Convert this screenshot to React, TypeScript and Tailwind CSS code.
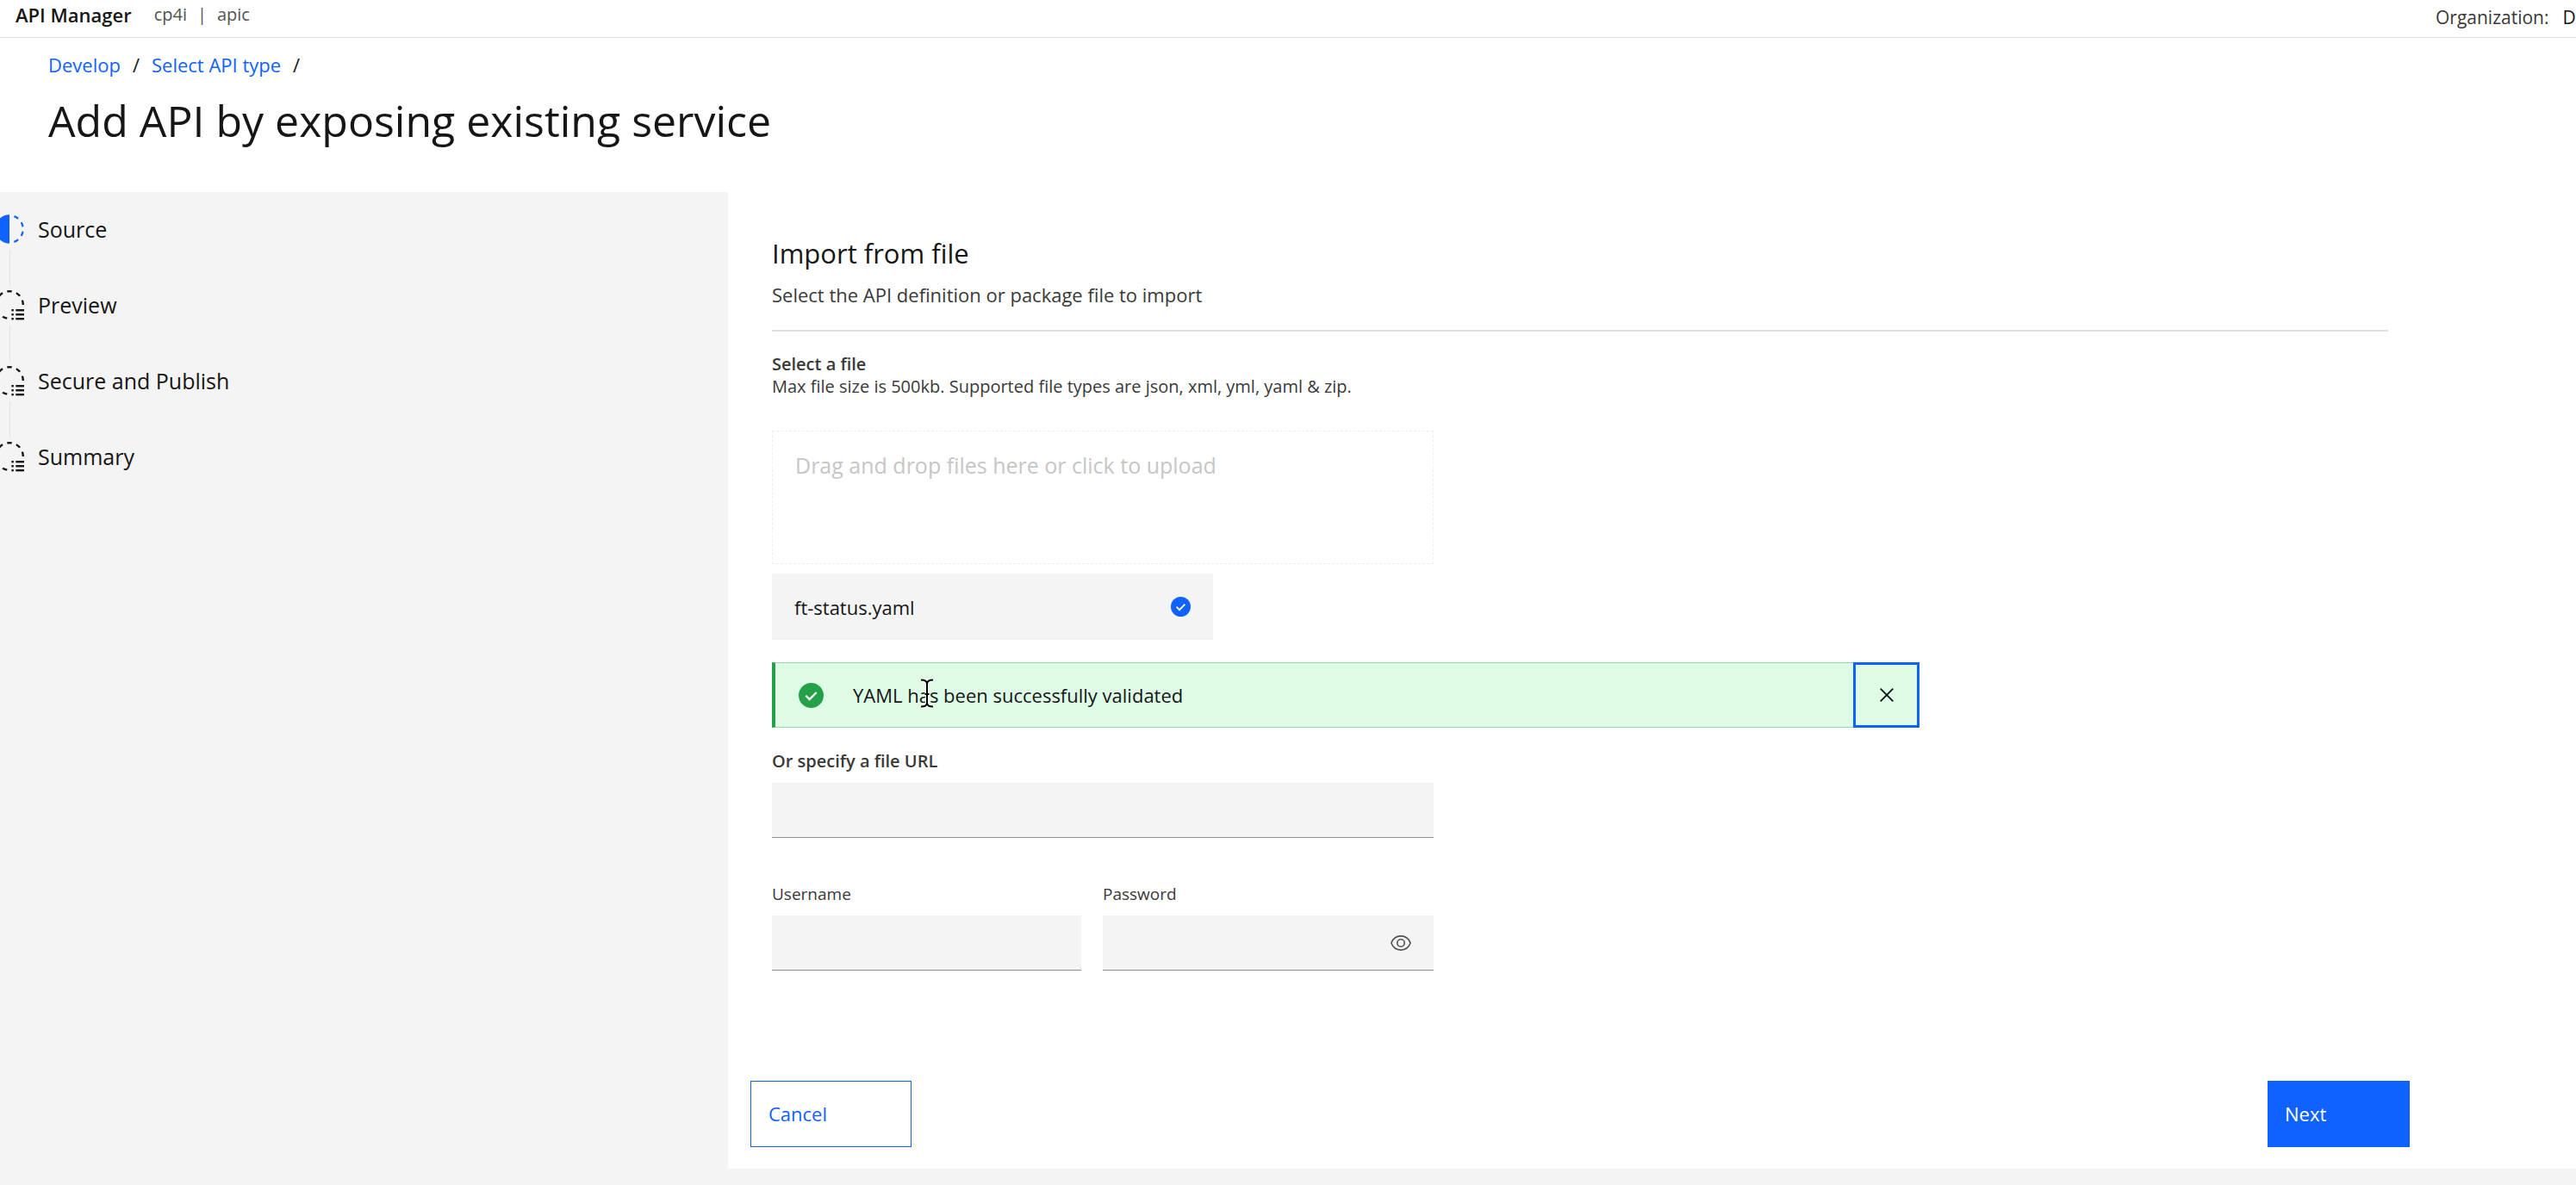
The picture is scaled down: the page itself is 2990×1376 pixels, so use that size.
import type { ReactNode } from "react";

const arc = (deg: number, span = 11) => {
  const point = (d: number) => {
    const a = (d * Math.PI) / 180;
    return `${(19 + 15.8 * Math.cos(a)).toFixed(2)} ${(19 + 15.8 * Math.sin(a)).toFixed(2)}`;
  };
  return `M${point(deg - span)}A15.8 15.8 0 0 1 ${point(deg + span)}`;
};

function CurrentIcon() {
  return (
    <svg className="size-[38px]" viewBox="0 0 38 38" aria-hidden="true">
      <path d="M19 2.3a16.7 16.7 0 0 0 0 33.4z" fill="#0f62fe" />
      {[-60, -20, 20, 60].map((deg) => (
        <path key={deg} d={arc(deg, 10)} fill="none" stroke="#0f62fe" strokeWidth="2.2" />
      ))}
    </svg>
  );
}

function PendingIcon() {
  return (
    <svg className="size-[38px]" viewBox="0 0 38 38" aria-hidden="true">
      {[-170, -130, -90, -50, -10, 110, 150].map((deg) => (
        <path key={deg} d={arc(deg, 10)} fill="none" stroke="#161616" strokeWidth="2.4" />
      ))}
      {[24, 29, 34].map((y) => (
        <g key={y} fill="#161616">
          <rect x="21.4" y={y} width="2.4" height="2.4" />
          <rect x="26.3" y={y} width="9.7" height="2.4" />
        </g>
      ))}
    </svg>
  );
}

function CheckFilled({ className }: { className: string }) {
  return (
    <svg className={className} viewBox="0 0 28 28" aria-hidden="true">
      <circle cx="14" cy="14" r="14" fill="currentColor" />
      <path d="M8 14.2l4.2 4.2 7.8-7.8" fill="none" stroke="#fff" strokeWidth="2.2" />
    </svg>
  );
}

const cursorPath =
  "M1 2.5c4 0 7 1.5 7 4.5v22c0 3-3 4.5-7 4.5M15 2.5c-4 0-7 1.5-7 4.5v22c0 3 3 4.5 7 4.5M5.5 19h5";

const steps = ["Source", "Preview", "Secure and Publish", "Summary"];

function Steps() {
  return (
    <nav aria-label="Progress" className="w-[845px] shrink-0 overflow-hidden bg-[#f4f4f4] pt-6">
      <ol>
        {steps.map((step, i) => (
          <li key={step} className="flex h-[88px] gap-3.5" aria-current={i === 0 ? "step" : undefined}>
            <div className="-ml-2 flex w-[38px] flex-col items-center">
              {i === 0 ? <CurrentIcon /> : <PendingIcon />}
              {i < steps.length - 1 && <div className="mt-[5px] h-[42px] w-px bg-[#e0e0e0]" />}
            </div>
            <span className="text-[25px] leading-[38px]">{step}</span>
          </li>
        ))}
      </ol>
    </nav>
  );
}

function Field({
  id,
  label,
  type = "text",
  strong = false,
  className = "",
  children,
}: {
  id: string;
  label: string;
  type?: string;
  strong?: boolean;
  className?: string;
  children?: ReactNode;
}) {
  return (
    <div className={className}>
      <label
        htmlFor={id}
        className={
          strong
            ? "block text-[20px] leading-[26px] font-semibold text-[#393939]"
            : "block text-[19px] leading-[26px] text-[#393939]"
        }
      >
        {label}
      </label>
      <div className="mt-3 flex h-16 items-center border-b border-[#8d8d8d] bg-[#f4f4f4]">
        <input id={id} type={type} className="h-full min-w-0 flex-1 bg-transparent px-6 text-[22px] outline-none" />
        {children}
      </div>
    </div>
  );
}

function Notification() {
  return (
    <div
      role="status"
      className="mt-[26px] flex h-[76px] w-full max-w-[1332px] items-center border-y border-l-4 border-y-[#95d9a5] border-l-[#24a148] bg-[#defbe6]"
    >
      <CheckFilled className="ml-[27px] size-[29px] text-[#24a148]" />
      <p className="relative ml-[34px] text-[22px] leading-[34px]">
        YAML has been successfully validated
        <svg
          className="absolute top-[-3px] left-[78px] h-9 w-4"
          viewBox="0 0 16 36"
          fill="none"
          aria-hidden="true"
        >
          <path d={cursorPath} stroke="#fff" strokeWidth="4" />
          <path d={cursorPath} stroke="#000" strokeWidth="2" />
        </svg>
      </p>
      <button
        type="button"
        aria-label="Close notification"
        className="-my-px ml-auto flex h-[76px] w-[77px] shrink-0 items-center justify-center border-[3px] border-[#0f62fe]"
      >
        <svg className="size-4" viewBox="0 0 16 16" aria-hidden="true">
          <path d="M.7.7l14.600 14.600M15.300.7L.7 15.300" stroke="#161616" strokeWidth="1.9" />
        </svg>
      </button>
    </div>
  );
}

export default function App() {
  return (
    <div className="flex min-h-screen flex-col overflow-x-hidden bg-[#f4f4f4] font-['Open_Sans',sans-serif] text-[#161616]">
      <header className="flex h-11 items-start justify-between border-b border-[#e0e0e0] bg-white pl-[18px] whitespace-nowrap">
        <div className="flex items-center text-[20px] leading-[34px] text-[#525252]">
          <span className="mr-[26px] text-[22px] font-semibold text-[#161616]">API Manager</span>
          <span>cp4i</span>
          <span className="mx-3">|</span>
          <span>apic</span>
        </div>
        <div className="flex w-[163px] gap-4 overflow-hidden text-[21px] leading-10">
          <span className="text-[#393939]">Organization:</span>
          <span>D</span>
        </div>
      </header>

      <div className="bg-white px-14 pt-3.5 pb-[51px]">
        <nav aria-label="Breadcrumb" className="flex gap-3.5 text-[22px] leading-[34px]">
          <a href="#develop" className="text-[#0f62fe]">
            Develop
          </a>
          <span>/</span>
          <a href="#select-type" className="text-[#0f62fe]">
            Select API type
          </a>
          <span>/</span>
        </nav>
        <h1 className="mt-4 text-[50px] leading-[64px]">Add API by exposing existing service</h1>
      </div>

      <div className="flex">
        <Steps />
        <main className="min-w-0 flex-1 bg-white pt-[49px] pr-[193px] pb-[25px] pl-[26px]">
          <div className="px-[25px]">
            <h2 className="text-[31px] leading-[44px]">Import from file</h2>
            <p className="mt-[9px] text-[22px] leading-[34px] text-[#393939]">
              Select the API definition or package file to import
            </p>
            <hr className="mt-6 border-t-2 border-[#e0e0e0]" />

            <h3 className="mt-[25px] text-[20px] leading-[26px] font-semibold text-[#393939]">Select a file</h3>
            <p className="text-[20px] leading-[26px] text-[#393939]">
              Max file size is 500kb. Supported file types are json, xml, yml, yaml &amp; zip.
            </p>
            <button
              type="button"
              disabled
              className="mt-[38px] flex h-[155px] w-full max-w-[768px] items-start border border-dashed border-[#f0f0f0] px-[26px] pt-[22px] text-[25px] leading-[34px] text-[#c6c6c6]"
            >
              Drag and drop files here or click to upload
            </button>
            <div className="mt-[11px] flex h-[77px] w-full max-w-[512px] items-center justify-between bg-[#f4f4f4] px-[26px]">
              <span className="text-[22px] leading-[34px]">ft-status.yaml</span>
              <CheckFilled className="size-[23px] text-[#0f62fe]" />
            </div>

            <Notification />

            <Field id="url" label="Or specify a file URL" strong className="mt-[26px] max-w-[768px]" />
            <div className="mt-[52px] flex max-w-[768px] gap-[25px]">
              <Field id="username" label="Username" className="w-[359px]" />
              <Field id="password" label="Password" type="password" className="flex-1">
                <button type="button" aria-label="Show password" className="mr-[26px]">
                  <svg
                    className="h-[18px] w-6"
                    viewBox="0 0 24 18"
                    fill="none"
                    stroke="#525252"
                    strokeWidth="1.6"
                    aria-hidden="true"
                  >
                    <path d="M.9 9C2.7 4.2 7 .9 12 .9S21.3 4.2 23.1 9C21.3 13.8 17 17.1 12 17.1S2.7 13.8.9 9z" />
                    <circle cx="12" cy="9" r="4.2" />
                  </svg>
                </button>
              </Field>
            </div>
          </div>

          <div className="mt-32 flex justify-between text-[22px]">
            <button type="button" className="h-[77px] w-[187px] border border-[#0f62fe] px-5 text-left text-[#0f62fe]">
              Cancel
            </button>
            <button type="button" className="h-[77px] w-[165px] bg-[#0f62fe] px-5 text-left text-white">
              Next
            </button>
          </div>
        </main>
      </div>
    </div>
  );
}
